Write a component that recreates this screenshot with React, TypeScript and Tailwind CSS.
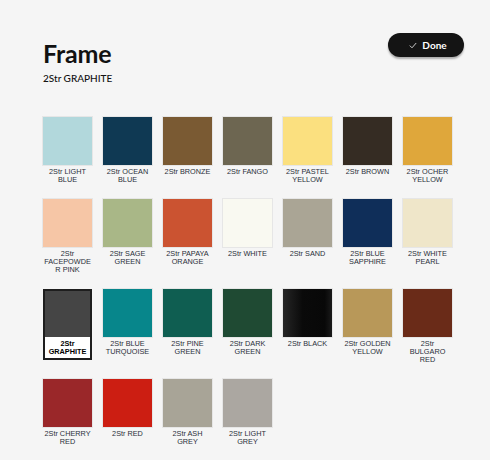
import React, { useState } from 'react';

type Finish = { name: string; swatch: string };

const FINISHES: Finish[] = [
  { name: '2Str LIGHT BLUE', swatch: 'bg-[#b2d8dc]' },
  { name: '2Str OCEAN BLUE', swatch: 'bg-[#0f3953]' },
  { name: '2Str BRONZE', swatch: 'bg-[#7a5a33]' },
  { name: '2Str FANGO', swatch: 'bg-[#6d6651]' },
  { name: '2Str PASTEL YELLOW', swatch: 'bg-[#fbe07f]' },
  { name: '2Str BROWN', swatch: 'bg-[#352c23]' },
  { name: '2Str OCHER YELLOW', swatch: 'bg-[#dfa73b]' },
  { name: '2Str FACEPOWDER PINK', swatch: 'bg-[#f6c6a6]' },
  { name: '2Str SAGE GREEN', swatch: 'bg-[#a9b787]' },
  { name: '2Str PAPAYA ORANGE', swatch: 'bg-[#cb5331]' },
  { name: '2Str WHITE', swatch: 'bg-[#f9f9f1]' },
  { name: '2Str SAND', swatch: 'bg-[#aaa595]' },
  { name: '2Str BLUE SAPPHIRE', swatch: 'bg-[#0f2e59]' },
  { name: '2Str WHITE PEARL', swatch: 'bg-[#efe6c9]' },
  { name: '2Str GRAPHITE', swatch: 'bg-[#454545]' },
  { name: '2Str BLUE TURQUOISE', swatch: 'bg-[#07868b]' },
  { name: '2Str PINE GREEN', swatch: 'bg-[#0f5e51]' },
  { name: '2Str DARK GREEN', swatch: 'bg-[#1f4a33]' },
  { name: '2Str BLACK', swatch: 'bg-[linear-gradient(to_right,#262626,#0a0a0a_40%,#080808_85%,#1a1a1a)]' },
  { name: '2Str GOLDEN YELLOW', swatch: 'bg-[#b89859]' },
  { name: '2Str BULGARO RED', swatch: 'bg-[#6a2b18]' },
  { name: '2Str CHERRY RED', swatch: 'bg-[#9a2729]' },
  { name: '2Str RED', swatch: 'bg-[#cc1e12]' },
  { name: '2Str ASH GREY', swatch: 'bg-[#a8a497]' },
  { name: '2Str LIGHT GREY', swatch: 'bg-[#aba7a1]' },
];

const App: React.FC = () => {
  const [selected, setSelected] = useState('2Str GRAPHITE');

  return (
    <div className="min-h-screen bg-[#f5f5f5] pl-[43px] pr-[26px] pt-[33px] font-['Liberation_Sans',Arial,sans-serif] text-[#111]">
      <header className="flex items-start justify-between">
        <div className="pt-[5px]">
          <h1 className="font-['Lato',sans-serif] text-[25px] font-bold leading-[30px] tracking-[-0.2px]">Frame</h1>
          <p className="mt-[4px] font-['Lato',sans-serif] text-[10px] font-medium leading-[12px]">{selected}</p>
        </div>
        <button className="flex h-6 w-[76px] items-center justify-center gap-[5px] rounded-full bg-[#141414] pl-1 text-white shadow-[0_2px_2px_rgba(0,0,0,0.3)]">
          <svg width="8" height="7" viewBox="0 0 8 7" fill="none">
            <path d="M0.8 3.6 L3 5.8 L7.2 1" stroke="#ddd" strokeWidth="0.9" />
          </svg>
          <span className="font-['Lato',sans-serif] text-[10px] font-bold">Done</span>
        </button>
      </header>

      <div className="mt-[33px] grid grid-cols-[repeat(7,49px)] gap-x-[11px] gap-y-[15px]">
        {FINISHES.map((f) => {
          const active = f.name === selected;
          if (active) {
            return (
              <button
                key={f.name}
                onClick={() => setSelected(f.name)}
                className="flex h-[71px] w-[49px] flex-col self-start border-2 border-[#1e1e1e] bg-white text-left"
              >
                <div className={`h-[46px] w-full ${f.swatch}`} />
                <div className="flex flex-1 items-center justify-center whitespace-pre-line text-center text-[7.3px] font-bold leading-[8px] text-black">
                  {f.name.replace(' ', '\n')}
                </div>
              </button>
            );
          }
          return (
            <button key={f.name} onClick={() => setSelected(f.name)} className="flex w-[49px] flex-col items-center self-start">
              <div className={`h-[48px] w-[49px] shadow-[0_0_0_1px_#e6e6e6] ${f.swatch}`} />
              <div className="mt-[3px] w-[49px] text-center text-[7.3px] leading-[8px] break-words text-[#2a2f3a]">
                {f.name}
              </div>
            </button>
          );
        })}
      </div>
    </div>
  );
};

export default App;
